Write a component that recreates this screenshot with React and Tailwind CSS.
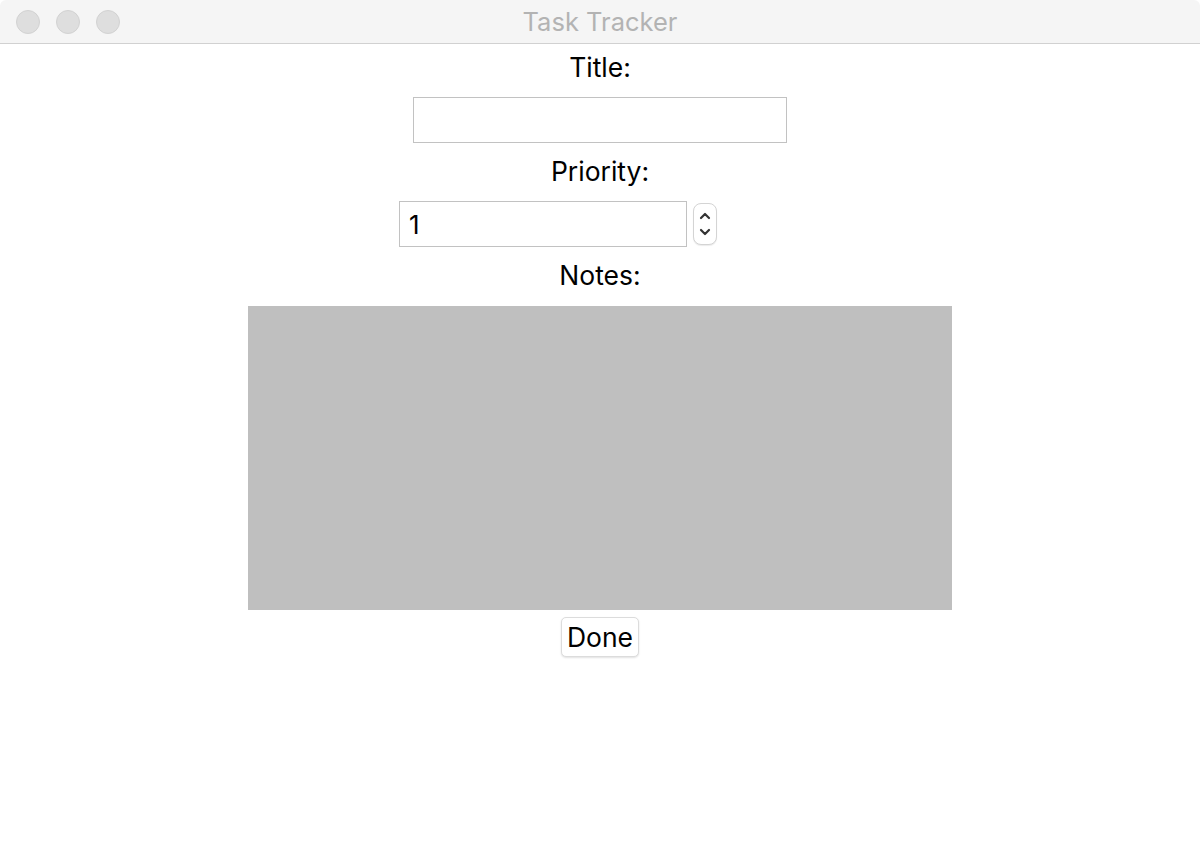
import { useState } from "react";

const TrafficLight = () => (
  <div className="w-[24px] h-[24px] rounded-full bg-[#dedede] border border-[#d2d2d2]"></div>
);

const App = () => {
  const [title, setTitle] = useState("");
  const [priority, setPriority] = useState(1);
  const [notes, setNotes] = useState("");

  return (
    <div className="w-[1200px] h-[844px] bg-white flex flex-col font-['Inter','DejaVu_Sans',sans-serif] text-black">
      {/* window title bar */}
      <div className="h-[44px] shrink-0 bg-[#f5f5f5] border-b border-[#d1d1d1] rounded-t-[6px] flex items-center relative">
        <div className="flex gap-[16px] pl-[16px]">
          <TrafficLight />
          <TrafficLight />
          <TrafficLight />
        </div>
        <div className="absolute inset-x-0 top-0 h-[44px] flex items-center justify-center text-[25.5px] text-[#b3b3b3] pointer-events-none">
          Task Tracker
        </div>
      </div>

      {/* form */}
      <div className="flex flex-col items-center">
        <label className="mt-[9px] h-[28px] leading-[28px] text-[26.5px]">Title:</label>
        <input
          value={title}
          onChange={e => setTitle(e.target.value)}
          className="mt-[16px] w-[374px] h-[46px] border border-[#c2c2c2] outline-none px-[9px] text-[26px]"
        />

        <label className="mt-[14px] h-[28px] leading-[28px] text-[26.5px]">Priority:</label>
        <div className="mt-[16px] w-[402px] flex items-center">
          <input
            value={priority}
            onChange={e => setPriority(e.target.value)}
            className="w-[288px] h-[46px] border border-[#c2c2c2] outline-none px-[9px] text-[26px]"
          />
          <div className="ml-[6px] w-[24px] h-[42px] rounded-[8px] border border-[#d4d4d4] bg-white shadow-[0_1px_1px_rgba(0,0,0,0.08)] flex flex-col items-center justify-center gap-[8px]">
            <button onClick={() => setPriority(p => Number(p) + 1)}>
              <svg width="12" height="8" viewBox="0 0 12 8" fill="none" stroke="#333" strokeWidth="2.2" strokeLinecap="round" strokeLinejoin="round">
                <path d="M2 6 L6 2 L10 6" />
              </svg>
            </button>
            <button onClick={() => setPriority(p => Number(p) - 1)}>
              <svg width="12" height="8" viewBox="0 0 12 8" fill="none" stroke="#333" strokeWidth="2.2" strokeLinecap="round" strokeLinejoin="round">
                <path d="M2 2 L6 6 L10 2" />
              </svg>
            </button>
          </div>
        </div>

        <label className="mt-[14px] h-[28px] leading-[28px] text-[26.5px]">Notes:</label>
        <textarea
          value={notes}
          onChange={e => setNotes(e.target.value)}
          className="mt-[17px] w-[704px] h-[304px] bg-[#bfbfbf] outline-none resize-none p-2 text-[20px]"
        />

        <button className="mt-[7px] w-[78px] h-[40px] rounded-[5px] bg-white border border-[#dcdcdc] shadow-[0_1px_2px_rgba(0,0,0,0.12)] text-[26.5px] leading-none">
          Done
        </button>
      </div>
    </div>
  );
};

export default App;
